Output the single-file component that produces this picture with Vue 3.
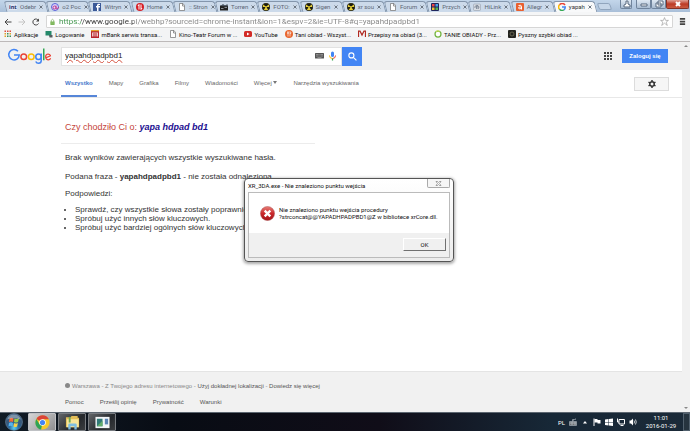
<script setup>
import { ref } from 'vue'

const art = {
  int: '<rect y="2" width="16" height="12" fill="#dfe6f2"/><text x="0" y="12" font-family="Open Sans" font-size="11" font-weight="bold" fill="#1d2b66">int</text>',
  o2: '<circle cx="8" cy="8" r="7" fill="#dcd9ff" stroke="#5a62d8" stroke-width="2"/><circle cx="7" cy="9" r="3" fill="none" stroke="#c03a8c" stroke-width="2"/><path d="M10 5v6c2 2 5 0 5-3" fill="none" stroke="#c03a8c" stroke-width="2"/>',
  facebook: '<rect width="16" height="16" fill="#3b5998"/><path d="M8 16V9H6V6h2V5c0-3 2-4 6-3v2c-2 0-3 0-3 1v1h3v3h-3v7z" fill="#fff"/>',
  home: '<circle cx="8" cy="8" r="8" fill="#d71d24"/><path d="M6 3v10M10 3v10M4 6l2-3M12 10l-2 3" stroke="#fff" stroke-width="2" fill="none"/>',
  page: '<path d="M3 1h7l3 4v10H3z" fill="#fff" stroke="#777" stroke-width="1.5"/><path d="M9 1v5h4" fill="none" stroke="#777" stroke-width="1.5"/>',
  torrent: '<rect y="5" width="16" height="10" fill="#222"/><path d="M1 6l5-4 4 3 5-3v5z" fill="#48525e"/><path d="M2 11h5M9 9h5" stroke="#a8afb8" stroke-width="1.5"/>',
  stalker: '<circle cx="8" cy="8" r="8" fill="#1c1c10"/><circle cx="8" cy="8" r="6.5" fill="#e6cf3a"/><path d="M8 8L3 3q5-4 10 0zM8 8l5 6q2-2 2-6zM8 8l-5 6q-2-2-2-6z" fill="#1c1c10"/><circle cx="8" cy="8" r="1.8" fill="#e6cf3a"/>',
  joomla: '<rect width="16" height="16" rx="2" fill="#20265c"/><rect x="2" y="2" width="5" height="5" fill="#e44"/><rect x="9" y="2" width="5" height="5" fill="#4aa3e8"/><rect x="2" y="9" width="5" height="5" fill="#f1bf32"/><rect x="9" y="9" width="5" height="5" fill="#50b455"/>',
  hilink: '<rect x="1" y="2" width="14" height="13" rx="2" fill="#d9dde3" stroke="#8b95a3"/><path d="M4 10a4 4 0 1 1 7 1M7 12V6h3v6" fill="none" stroke="#6d7989" stroke-width="1.5"/>',
  allegro: '<rect width="16" height="16" rx="2" fill="#e9602f"/><path d="M5 5q6-2 6 2v6M11 8q-6-1-6 2t6 1" fill="none" stroke="#fff" stroke-width="2"/>',
  google: '<path d="M14 4A7 7 0 0 0 3 3.500" fill="none" stroke="#ea4335" stroke-width="3"/><path d="M3 3.500a7 7 0 0 0 0 9" fill="none" stroke="#fbbc05" stroke-width="3"/><path d="M3 12.500a7 7 0 0 0 9 1" fill="none" stroke="#34a853" stroke-width="3"/><path d="M8 8h6.500q0 4-2.500 5.500" fill="none" stroke="#4285f4" stroke-width="3"/>',
  apps: '<g fill="#d94b3f"><rect x="1" y="1" width="3" height="3"/><rect x="6" y="1" width="3" height="3"/><rect x="11" y="1" width="3" height="3"/></g><g fill="#e2a12a"><rect x="1" y="6" width="3" height="3"/><rect x="11" y="6" width="3" height="3"/><rect x="1" y="11" width="3" height="3"/></g><g fill="#3c8f5a"><rect x="6" y="6" width="3" height="3"/><rect x="6" y="11" width="3" height="3"/><rect x="11" y="11" width="3" height="3"/></g>',
  login: '<path d="M1 2h12v9H1z" fill="#258a6b"/><path d="M8 10h7v5H9z" fill="#565d62"/>',
  mbank: '<rect width="16" height="16" fill="#b8242a"/><path d="M3 13V5M6 13V4M10 13V4M13 13V5" stroke="#fff" stroke-width="1.5"/><path d="M0 1h16" stroke="#e6a431" stroke-width="3"/>',
  youtube: '<rect y="2" width="16" height="12" rx="3" fill="#d22b27"/><path d="M6 5l5 3-5 3z" fill="#fff"/>',
  dinner: '<circle cx="8" cy="8" r="8" fill="#e8642b"/><path d="M5 3v4q1 2 2 0V3M6 7v6M10 3v10M10 3q3 2 1 5" fill="none" stroke="#fff" stroke-width="1.300"/>',
  recipe: '<path d="M1 14V2h3l4 8 4-8h3v12" fill="none" stroke="#b12a22" stroke-width="2.500"/>',
  cheap: '<circle cx="8" cy="8" r="6" fill="#fff" stroke="#72b442" stroke-width="2.500"/><path d="M4 3q4-3 7 0" stroke="#d4df4b" stroke-width="2" fill="none"/>',
  tasty: '<rect width="16" height="16" rx="2" fill="#22231f"/><circle cx="8" cy="8" r="4" fill="none" stroke="#77765c" stroke-width="1.500"/>',
}

const tabs = [
  ['int', 'Odebr'], ['o2', 'o2 Poc'], ['facebook', 'Witryn'], ['home', 'Home'],
  ['page', ':: Stron'], ['torrent', 'Torren'], ['stalker', 'FOTO:'], ['stalker', 'Sigen'],
  ['stalker', 'xr sou'], ['page', 'Forum'], ['joomla', 'Przych'], ['hilink', 'HiLink'],
  ['allegro', 'Allegr'], ['google', 'yapah'],
]
const bookmarks = [
  ['apps', 'Aplikacje'], ['login', 'Logowanie'], ['mbank', 'mBank serwis transa...'],
  ['page', 'Kino-Teatr Forum w ...'], ['youtube', 'YouTube'], ['dinner', 'Tani obiad - Wszyst...'],
  ['recipe', 'Przepisy na obiad (3...'], ['cheap', 'TANIE OBIADY - Prz...'], ['tasty', 'Pyszny szybki obiad ...'],
]
const sections = ['Wszystko', 'Mapy', 'Grafika', 'Filmy', 'Wiadomości']
const hints = [
  'Sprawdź, czy wszystkie słowa zostały poprawnie napisane.',
  'Spróbuj użyć innych słów kluczowych.',
  'Spróbuj użyć bardziej ogólnych słów kluczowych.',
]
const url = ref('https://www.google.pl/webhp?sourceid=chrome-instant&ion=1&espv=2&ie=UTF-8#q=yapahdpadpbd1')
const query = ref('yapahdpadpbd1')
</script>

<template>
  <div class="desktop">
    <div class="tabstrip">
      <div class="tabs">
        <div v-for="([icon, title], i) in tabs" :key="i" class="tab" :class="{ current: i === tabs.length - 1 }">
          <svg class="favicon" viewBox="0 0 16 16" v-html="art[icon]" />
          <span class="tab-title">{{ title }}</span>
          <button class="tab-close" aria-label="Zamknij kartę">
            <svg viewBox="0 0 8 8"><path d="M1 1l6 6M7 1L1 7" /></svg>
          </button>
        </div>
      </div>
      <button class="new-tab" aria-label="Nowa karta"></button>
      <div class="window-buttons">
        <button class="win user" aria-label="Profil"><svg viewBox="0 0 12 8"><path d="M3 7V5l2-1V1h2v3l2 1v2z" /></svg></button>
        <button class="win" aria-label="Minimalizuj"><svg viewBox="0 0 12 8"><path d="M3 4h6v2H3z" /></svg></button>
        <button class="win" aria-label="Przywróć"><svg viewBox="0 0 12 8"><path d="M5 1h5v4H5zM3 3h5v4H3z" /></svg></button>
        <button class="win close" aria-label="Zamknij"><svg viewBox="0 0 12 8"><path d="M4 2l4 4M8 2L4 6" /></svg></button>
      </div>
    </div>

    <div class="toolbar">
      <button class="tool" aria-label="Wstecz"><svg viewBox="0 0 16 16"><path d="M15 8H2M8 2L2 8l6 6" /></svg></button>
      <button class="tool off" aria-label="Dalej"><svg viewBox="0 0 16 16"><path d="M1 8h13M8 2l6 6-6 6" /></svg></button>
      <button class="tool" aria-label="Odśwież"><svg viewBox="0 0 16 16"><path d="M13 11a6 6 0 1 1 0-6" /><path d="M14 1v6H8z" fill="#444" stroke="none" /></svg></button>
      <div class="omnibox">
        <svg class="lock" viewBox="0 0 12 16"><path d="M3 8V4q3-5 6 0v4" fill="none" stroke="#8ab56e" stroke-width="2" /><rect x="1" y="7" width="10" height="8" fill="#6fae4a" /><path d="M1 9.500h10M1 12h10" stroke="#a8d08d" /></svg>
        <input v-model="url" class="url" aria-label="Adres" spellcheck="false">
        <button class="star" aria-label="Dodaj zakładkę"><svg viewBox="0 0 16 16"><path d="M8 1l2 5h5l-4 3 2 6-5-4-5 4 2-6-4-3h5z" /></svg></button>
      </div>
      <button class="menu" aria-label="Menu"><svg viewBox="0 0 8 8"><path d="M1 1h6M1 4h6M1 7h6" /></svg></button>
    </div>

    <nav class="bookmarks" aria-label="Zakładki">
      <a v-for="[icon, name] in bookmarks" :key="name" href="#">
        <svg class="favicon" viewBox="0 0 16 16" v-html="art[icon]" />{{ name }}
      </a>
    </nav>

    <div class="viewport">
      <div class="page">
        <header class="search-head">
          <a class="logo" href="#" aria-label="Google">
            <svg viewBox="0 0 88 32" fill="none" stroke-width="3">
              <path d="M22 6.500A10.500 10.500 0 1 0 24.500 14H14" stroke="#4285f4" />
              <circle cx="33.500" cy="17.500" r="5.700" stroke="#ea4335" />
              <circle cx="48.500" cy="17.500" r="5.700" stroke="#fbbc05" />
              <circle cx="63" cy="17.500" r="5.500" stroke="#4285f4" />
              <path d="M68.500 11v14q0 5.500-5.500 5.500-4 0-5.500-3.500" stroke="#4285f4" />
              <path d="M73.500 1v23.500" stroke="#34a853" />
              <path d="M78 19.500l9-4q-1.500-3.500-4.500-3.500c-7.500.500-6.500 11.500.500 11.500q3 0 4.500-3" stroke="#ea4335" stroke-width="2.500" />
            </svg>
          </a>
          <form class="search" @submit.prevent>
            <div class="field">
              <div class="query-wrap">
                <input v-model="query" class="query" aria-label="Szukaj" spellcheck="false">
              </div>
              <svg class="keyboard" viewBox="0 0 18 12"><rect width="18" height="11" rx="1" fill="#555" /><path d="M2 3h14M2 6h14" stroke="#bbb" stroke-width="1.500" stroke-dasharray="1.500 1" /><path d="M5 9h8" stroke="#bbb" /></svg>
              <svg class="mic" viewBox="0 0 14 20"><rect x="4" y="1" width="6" height="11" rx="3" fill="#4285f4" /><path d="M1 9q0 6 6 6" fill="none" stroke="#fbbc05" stroke-width="2" /><path d="M13 9q0 6-6 6" fill="none" stroke="#ea4335" stroke-width="2" /><path d="M7 15v4" stroke="#34a853" stroke-width="2.500" /></svg>
            </div>
            <button class="go" aria-label="Szukaj w Google"><svg viewBox="0 0 16 16"><circle cx="6" cy="6" r="4.500" /><path d="M9.500 9.500L15 15" /></svg></button>
          </form>
          <button class="apps" aria-label="Aplikacje Google"><svg viewBox="0 0 8 8"><path d="M0 1h8M0 4h8M0 7h8" /></svg></button>
          <a class="signin" href="#">Zaloguj się</a>
        </header>

        <nav class="sections" aria-label="Rodzaj wyników">
          <a v-for="(s, i) in sections" :key="s" href="#" :class="{ active: i === 0 }">{{ s }}</a>
          <a href="#">Więcej <i class="caret"></i></a>
          <a href="#">Narzędzia wyszukiwania</a>
          <button class="settings" aria-label="Ustawienia">
            <svg viewBox="0 0 16 16"><circle cx="8" cy="8" r="4.500" fill="none" stroke="#333" stroke-width="3" /><path d="M8 0v3M8 13v3M1 4l3 2M12 10l3 2M1 12l3-2M12 6l3-2" stroke="#333" stroke-width="3" /></svg>
          </button>
        </nav>

        <main class="results">
          <p class="suggest">Czy chodziło Ci o: <a href="#">yapa hdpad bd1</a></p>
          <p>Brak wyników zawierających wszystkie wyszukiwane hasła.</p>
          <p class="phrase">Podana fraza - <b>yapahdpadpbd1</b> - nie została odnaleziona.</p>
          <p class="tips">Podpowiedzi:</p>
          <ul>
            <li v-for="h in hints" :key="h">{{ h }}</li>
          </ul>
        </main>

        <footer class="foot">
          <div class="place"><i class="dot"></i>Warszawa - Z Twojego adresu internetowego - <a href="#">Użyj dokładnej lokalizacji</a> - <a href="#">Dowiedz się więcej</a></div>
          <div class="links">
            <a href="#">Pomoc</a><a href="#">Prześlij opinię</a><a href="#">Prywatność</a><a href="#">Warunki</a>
          </div>
        </footer>
      </div>
      <div class="scrollbar"><i class="up"></i><i class="down"></i></div>
    </div>

    <div class="taskbar">
      <button class="start" aria-label="Start">
        <svg viewBox="0 0 36 36">
          <defs><radialGradient id="orb" cy=".85"><stop offset="0" stop-color="#5fd0f0" /><stop offset=".6" stop-color="#24639a" /><stop offset="1" stop-color="#38597a" /></radialGradient></defs>
          <circle cx="18" cy="18" r="17" fill="url(#orb)" stroke="#7895ad" />
          <path d="M9 11q4-3 8 0l-1 7q-4-2-8 0z" fill="#f0693a" /><path d="M19 11q4 2 9-1l-2 8q-4 2-8 0z" fill="#9dcc45" />
          <path d="M8 20q4-3 8 0l-1 7q-4-3-8 0z" fill="#57b4ec" /><path d="M18 20q4 2 8 0l-2 7q-4 2-7 0z" fill="#f9d045" />
          <path d="M4 13q4-10 14-10t14 10q-14-5-28 0z" fill="#fff" opacity=".35" />
        </svg>
      </button>
      <button class="task on" aria-label="Chrome">
        <svg viewBox="0 0 32 32"><circle cx="16" cy="16" r="15" fill="#f6c928" /><path d="M16 16L3 8.500A15 15 0 0 1 29.500 9H16z" fill="#db4437" /><path d="M16 16l-3 15A15 15 0 0 1 3 8.500l6.500 11z" fill="#2fa355" /><circle cx="16" cy="16" r="7" fill="#fff" /><circle cx="16" cy="16" r="5.500" fill="#4285f4" /></svg>
      </button>
      <button class="task" aria-label="Eksplorator">
        <svg viewBox="0 0 32 32"><path d="M2 5h10l2-3h13v4h3v20H2z" fill="#e3bd57" /><path d="M4 9h25v17H4z" fill="#f7e69a" /><path d="M8 4h4v12H8z" fill="#6fa750" /><path d="M7 31V21q0-3 3-3h12q3 0 3 3v10h-5v-7h-8v7z" fill="#7dbde2" /></svg>
      </button>
      <button class="task" aria-label="Aplikacja">
        <svg viewBox="0 0 32 32"><rect x="1" y="4" width="30" height="24" fill="#f3f6f8" /><rect x="4" y="8" width="12" height="16" fill="#327a78" /><path d="M4 24l12-12v12z" fill="#63ad6b" /><rect x="21" y="8" width="7" height="12" fill="#5b85b5" /></svg>
      </button>
      <div class="tray">
        <span>PL</span>
        <svg viewBox="0 0 16 16"><path d="M1 7h14v8H1zM7 7V3h6V1" fill="#a9b1b8" stroke="#a9b1b8" /><path d="M2 10h12M2 13h12" stroke="#333" stroke-dasharray="2 1" /></svg>
        <svg viewBox="0 0 16 16"><path d="M4 11l4-5 4 5z" fill="#fff" /></svg>
        <svg viewBox="0 0 16 16"><path d="M2 1v15" stroke="#fff" stroke-width="2" /><path d="M3 2h6v2h6v7H9V9H3z" fill="#fff" /></svg>
        <svg viewBox="0 0 16 16"><path d="M0 3l7-1v6H0zM8 2l8-1v7H8zM0 9h7v6l-7-1zM8 9h8v7l-8-1z" fill="#fff" /></svg>
        <svg viewBox="0 0 16 16"><path d="M4 3h11v9H4zM7 15h6M1 1v7h3" fill="none" stroke="#fff" stroke-width="2" /></svg>
        <svg viewBox="0 0 16 16"><path d="M1 5h3l4-4v14l-4-4H1z" fill="#fff" /><path d="M10 5q2 3 0 6M13 3q3 5 0 10" fill="none" stroke="#fff" stroke-width="1.500" /></svg>
      </div>
      <div class="clock"><time>11:01</time><span>2016-01-29</span></div>
      <button class="peek" aria-label="Pokaż pulpit"></button>
    </div>

    <section class="dialog" role="alertdialog" aria-labelledby="dlg-title">
      <div class="dlg-bar">
        <span id="dlg-title">XR_3DA.exe - Nie znaleziono punktu wejścia</span>
        <button class="dlg-close" aria-label="Zamknij okno"><svg viewBox="0 0 12 10"><path d="M1 1h3l2 2 2-2h3L8 5l3 4H8L6 7 4 9H1l3-4z" /></svg></button>
      </div>
      <div class="dlg-body">
        <svg class="error" viewBox="0 0 32 32"><defs><linearGradient id="red" x2="0" y2="1"><stop offset="0" stop-color="#e88079" /><stop offset=".5" stop-color="#c9282b" /><stop offset="1" stop-color="#a31318" /></linearGradient></defs><circle cx="16" cy="16" r="15" fill="url(#red)" stroke="#a8484a" /><path d="M10 10l12 12M22 10L10 22" stroke="#fff" stroke-width="5" /></svg>
        <p>Nie znaleziono punktu wejścia procedury<br>?strconcat@@YAPADHPADPBD1@Z w bibliotece xrCore.dll.</p>
      </div>
      <div class="dlg-actions"><button class="ok">OK</button></div>
    </section>
  </div>
</template>

<style>
body { margin: 0; overflow: hidden; }
</style>

<style scoped>
* { box-sizing: border-box; }
button { padding: 0; border: 0; background: none; font: inherit; color: inherit; display: grid; place-items: center; }
a { color: inherit; text-decoration: none; }
p, ul { margin: 0; }
svg { display: block; }
.desktop { position: relative; display: flex; flex-direction: column; height: 100vh; overflow: hidden; background: #fff; font-family: Roboto, "Open Sans", sans-serif; font-size: 6px; color: #111; }

.tabstrip { display: flex; flex: none; height: 12px; padding-left: 4px; background: linear-gradient(#c3d6ea, #a9bfd8); }
.tabs { display: flex; flex: 1; min-width: 0; padding-top: 1px; }
.tab { position: relative; isolation: isolate; display: flex; flex: 1 1 0; min-width: 0; align-items: center; gap: 3px; padding: 0 4px 0 5px; line-height: 10px; color: #5b6674; }
.tab::before { content: ""; position: absolute; z-index: -1; inset: 0 -1px 0 1px; background: #ccdaea; border: 1px solid #8496ac; border-bottom: 0; border-radius: 3px 3px 0 0; transform: skewX(14deg); }
.tab.current { color: #333; }
.tab.current::before { background: #f8f9fa; }
.favicon { flex: none; width: 8px; height: 8px; }
.tab-title { flex: 1; white-space: nowrap; }
.tab-close svg { width: 4px; height: 4px; fill: none; stroke: #6d7681; stroke-width: 2; }
.new-tab { width: 13px; height: 7px; margin: 3px 9px 0 3px; background: #c6d6e8; border: 1px solid #91a5bd; border-radius: 2px; transform: skewX(20deg); }
.window-buttons { display: flex; align-items: flex-start; padding-right: 1px; }
.win { width: 15px; height: 9px; background: linear-gradient(#dfe9f3, #a9bcd1); border: 1px solid #70849c; border-top: 0; border-radius: 0 0 2px 2px; }
.win svg { width: 12px; height: 8px; fill: #fff; stroke: #56687e; stroke-width: 1; }
.win.user { width: 12px; margin-right: 4px; }
.win.close { width: 23px; background: linear-gradient(#dfa196, #bd3a25 50%, #c95b42); border-color: #853226; }
.win.close svg { fill: none; stroke: #fff; stroke-width: 2; }

.toolbar { display: flex; flex: none; align-items: center; gap: 6px; height: 17px; padding: 2px 4px 0; background: #f5f6f7; }
.tool { width: 8px; height: 12px; }
.tool svg { width: 8px; height: 8px; fill: none; stroke: #444; stroke-width: 2; }
.tool.off svg { stroke: #c4c4c4; }
.omnibox { display: flex; flex: 1; align-items: center; gap: 4px; height: 13px; padding: 0 3px; background: #fff; border: 1px solid #d6d6d6; border-radius: 1px; }
.lock { width: 5px; height: 8px; }
.url { flex: 1; min-width: 0; height: 11px; padding: 0; border: 0; outline: 0; font: 8px/11px Roboto, "Open Sans", sans-serif; color: transparent; background: linear-gradient(to right, #3b9247 0 22px, #333 22px 75px, #858585 75px); -webkit-background-clip: text; background-clip: text; }
.star svg { width: 9px; height: 9px; fill: #fff; stroke: #8b8b8b; stroke-width: 1; }
.menu svg { width: 7px; height: 7px; stroke: #444; stroke-width: 2; }
.bookmarks { display: flex; flex: none; gap: 7px; height: 13px; padding: 0 4px 2px; background: #f3f4f5; border-bottom: 1px solid #bdb9b9; white-space: nowrap; }
.bookmarks a { display: flex; align-items: center; gap: 2px; }

.viewport { display: flex; flex: 1; min-height: 0; font-family: "Liberation Sans", sans-serif; }
.page { display: flex; flex: 1; flex-direction: column; min-width: 0; }
.scrollbar { display: flex; flex-direction: column; justify-content: space-between; align-items: center; width: 8px; padding: 3px 0; background: #f1f1f1; }
.up, .down { border: 2px solid transparent; }
.up { border-top: 0; border-bottom-color: #888; }
.down { border-bottom: 0; border-top-color: #888; }
.search-head { display: flex; flex: none; align-items: center; height: 28px; padding: 0 14px 0 7px; background: #f1f1f1; }
.logo { width: 54px; }
.logo svg { width: 44px; height: 16px; }
.search { display: flex; flex: 0 1 301px; height: 19px; }
.field { display: flex; flex: 1; align-items: center; gap: 5px; padding: 0 5px 0 3px; background: #fff; border: 1px solid #e2e2e2; }
.query-wrap { flex: 1; }
.query { width: 100%; height: 14px; padding: 0; border: 0; outline: 0; background: none; font: 8px/14px "Liberation Sans", sans-serif; color: #222; text-decoration: underline wavy #d5513f 1px; text-underline-offset: 1px; }
.keyboard { width: 9px; height: 6px; }
.mic { width: 7px; height: 10px; }
.go { width: 20px; background: #4285f4; }
.go svg { width: 9px; height: 9px; fill: none; stroke: #fff; stroke-width: 2; }
.apps { margin-left: auto; margin-right: 10px; }
.apps svg { width: 8px; height: 8px; stroke: #444; stroke-width: 2; stroke-dasharray: 2 1; }
.signin { width: 46px; height: 14px; background: #4285f4; color: #fff; font-weight: bold; line-height: 14px; text-align: center; }
.sections { display: flex; flex: none; align-items: stretch; gap: 8px; height: 28px; padding: 0 13px 0 61px; border-bottom: 1px solid #e8e8e8; color: #666; line-height: 26px; white-space: nowrap; }
.sections a { padding: 0 4px; }
.sections a.active { color: #4678cc; font-weight: bold; border-bottom: 2px solid #5686d8; }
.caret { display: inline-block; border: 2px solid transparent; border-top: 3px solid #777; border-bottom: 0; vertical-align: 1px; }
.settings { align-self: center; width: 35px; height: 14px; margin-left: auto; background: #f6f6f6; border: 1px solid #dcdcdc; }
.settings svg { width: 8px; height: 8px; }
.results { flex: 1; padding: 20px 61px 0; font-size: 8px; line-height: 9px; color: #333; }
.results p { padding-left: 4px; }
.results .suggest { width: 254px; height: 26px; margin-bottom: 9px; border-bottom: 1px solid #ececec; font-size: 9px; line-height: 18px; color: #c5443a; }
.suggest a { color: #1a0d8f; font-weight: bold; font-style: italic; }
.results .phrase { margin-top: 10px; }
.results .tips { margin-top: 8px; }
.results ul { margin-top: 7px; padding-left: 14px; }
.foot { flex: none; display: flex; flex-direction: column; gap: 8px; height: 41px; padding: 10px 0 0 65px; background: #f1f1f1; border-top: 1px solid #e4e4e4; color: #888; line-height: 8px; }
.foot a { color: #555; }
.dot { display: inline-block; width: 5px; height: 5px; margin-right: 2px; background: #888; border-radius: 50%; }
.links { display: flex; gap: 16px; }

.taskbar { display: flex; flex: none; align-items: stretch; gap: 2px; height: 19px; padding-left: 3px; border-top: 1px solid #5c6670; background: linear-gradient(to right, #111c26, #080c14 25%, #100d18 55%, #172837 80%, #1b2a38); color: #fff; }
.start { width: 21px; margin-right: 2px; }
.start svg { width: 18px; height: 18px; }
.task { width: 28px; background: linear-gradient(135deg, #636669, #25282c 60%, #3a3d40); border: 1px solid #777b80; border-radius: 1px; }
.task.on { background: linear-gradient(135deg, #d6d6d6, #8e8e90); border-color: #bfc1c4; }
.task svg { width: 15px; height: 15px; }
.tray { display: flex; align-items: center; gap: 4px; margin-left: auto; }
.tray svg { width: 8px; height: 8px; }
.clock { display: flex; flex-direction: column; justify-content: center; width: 40px; margin-left: 2px; line-height: 8px; text-align: center; }
.peek { width: 7px; border: 1px solid #51606d; background: #26343f; }

.dialog { position: absolute; left: 244px; top: 178px; width: 210px; padding: 0 3px 3px; background: linear-gradient(#fff, #ececec); border: 1px solid #555; border-radius: 4px; box-shadow: 0 1px 3px 1px #0005; }
.dlg-bar { display: flex; justify-content: space-between; height: 13px; line-height: 13px; }
.dlg-close { width: 23px; height: 9px; border: 1px solid #aaa; border-top: 0; border-radius: 0 0 2px 2px; background: #f6f6f6; }
.dlg-close svg { width: 7px; height: 5px; fill: #fff; stroke: #555; stroke-width: 1; }
.dlg-body { display: flex; align-items: center; gap: 4px; height: 41px; padding-left: 11px; background: #fff; border: 1px solid #bbb; border-bottom: 0; line-height: 7px; white-space: nowrap; }
.error { flex: none; width: 15px; height: 15px; }
.dlg-actions { display: flex; justify-content: flex-end; height: 25px; padding: 5px 3px; background: #f0f0f0; border: 1px solid #bbb; border-top: 0; }
.ok { width: 43px; height: 13px; border: 1px solid; border-color: #fff #707070 #707070 #fff; background: #f0f0f0; }
</style>
